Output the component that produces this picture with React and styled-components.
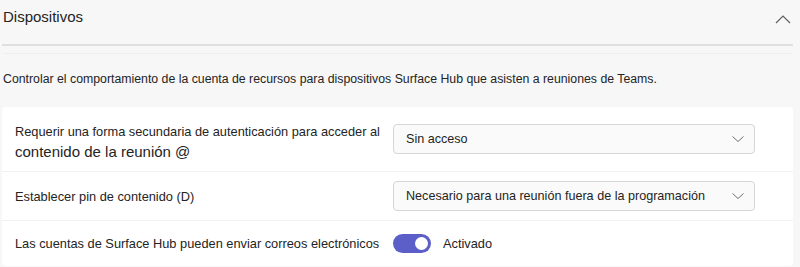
import React from "react";
import styled, { createGlobalStyle } from "styled-components";

const Global = createGlobalStyle`
  html, body { margin: 0; padding: 0; background: #f7f7f7; }
  body { font-family: "Liberation Sans", Arial, sans-serif; color: #242424; }
`;

const Page = styled.div`
  width: 791px;
  padding: 0 0 0 2px;
  height: 267px;
  overflow: hidden;
`;

const Header = styled.div`
  display: flex;
  align-items: flex-start;
  justify-content: space-between;
  height: 46px;
  box-sizing: border-box;
  padding: 8px 2px 0 1px;
  border-bottom: 2px solid #e0e0e0;
`;

const Title = styled.h2`
  margin: 0;
  font-size: 15px;
  line-height: 18px;
  font-weight: 400;
  color: #242424;
  font-family: "Liberation Sans", Arial, sans-serif;
`;

const ChevronBox = styled.div`
  padding-top: 7px;
  display: flex;
`;

const Faint = styled.div`
  height: 1px;
  background: #efefef;
  margin-top: 7px;
`;

const Description = styled.p`
  margin: 17px 0 0 1px;
  font-size: 12.3px;
  color: #242424;
  font-family: "Liberation Sans", Arial, sans-serif;
  line-height: 16px;
`;

const Card = styled.div`
  margin-top: 20px;
  background: #ffffff;
  border-radius: 4px;
  display: flex;
  flex-direction: column;
`;

const Row = styled.div`
  display: grid;
  grid-template-columns: 378px 362px 1fr;
  align-items: center;
  height: ${(p) => p.$h}px;
  padding-left: 13px;
  border-top: ${(p) => (p.$first ? "none" : "1px solid #f2f2f2")};
  box-sizing: border-box;
`;

const Label = styled.div`
  font-family: "Liberation Sans", Arial, sans-serif;
  font-size: 12.8px;
  line-height: 19px;
  color: #242424;
  white-space: nowrap;
  margin-top: ${(p) => p.$shift || 0}px;
`;

const Big = styled.span`
  display: block;
  font-size: 15px;
  line-height: 21px;
`;

const Select = styled.div`
  height: 30px;
  box-sizing: border-box;
  border: 1px solid #d6d6d6;
  border-radius: 4px;
  background: #fafafa;
  display: flex;
  align-items: center;
  justify-content: space-between;
  padding: 0 9px 0 12px;
  font-family: "Liberation Sans", Arial, sans-serif;
  font-size: 12.6px;
  color: #242424;
`;

const ToggleWrap = styled.div`
  display: flex;
  align-items: center;
  gap: 12px;
  font-family: "Liberation Sans", Arial, sans-serif;
  font-size: 12.8px;
`;

const Track = styled.div`
  width: 38px;
  height: 19px;
  border-radius: 10px;
  background: #5b5fc7;
  display: flex;
  align-items: center;
  justify-content: flex-end;
  padding-right: 3px;
  box-sizing: border-box;
`;

const Knob = styled.div`
  width: 13px;
  height: 13px;
  border-radius: 50%;
  background: #fff;
`;

const ChevronDown = () => (
  <svg width="14" height="8" viewBox="0 0 14 8" fill="none">
    <path d="M1.5 1.5l5.5 5 5.5-5" stroke="#707070" strokeWidth="1" />
  </svg>
);

const ChevronUp = () => (
  <svg width="16" height="9" viewBox="0 0 16 9" fill="none">
    <path d="M1 8l7-7 7 7" stroke="#616161" strokeWidth="1.2" />
  </svg>
);

export default function App() {
  return (
    <>
      <Global />
      <Page>
        <Header>
          <Title>Dispositivos</Title>
          <ChevronBox>
            <ChevronUp />
          </ChevronBox>
        </Header>
        <Faint />
        <Description>
          Controlar el comportamiento de la cuenta de recursos para dispositivos Surface Hub que asisten a reuniones de Teams.
        </Description>
        <Card>
          <Row $h={64} $first>
            <Label $shift={5}>
              Requerir una forma secundaria de autenticación para acceder al
              <Big>contenido de la reunión @</Big>
            </Label>
            <Select>
              <span>Sin acceso</span>
              <ChevronDown />
            </Select>
          </Row>
          <Row $h={49}>
            <Label>Establecer pin de contenido (D)</Label>
            <Select>
              <span>Necesario para una reunión fuera de la programación</span>
              <ChevronDown />
            </Select>
          </Row>
          <Row $h={46}>
            <Label>Las cuentas de Surface Hub pueden enviar correos electrónicos</Label>
            <ToggleWrap>
              <Track>
                <Knob />
              </Track>
              <span>Activado</span>
            </ToggleWrap>
          </Row>
        </Card>
      </Page>
    </>
  );
}
